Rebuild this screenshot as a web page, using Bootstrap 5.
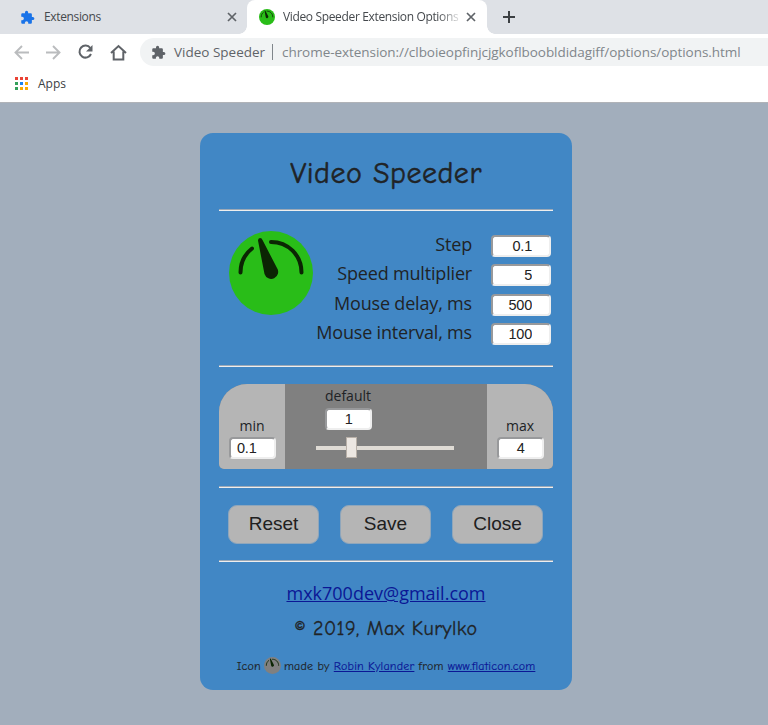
<!DOCTYPE html>
<html lang="en">
<head>
<meta charset="utf-8">
<meta name="viewport" content="width=device-width, initial-scale=1">
<title>Video Speeder Extension Options</title>
<link href="https://cdn.jsdelivr.net/npm/bootstrap@5.3.0/dist/css/bootstrap.min.css" rel="stylesheet">
<style>
html,body{height:100%;overflow:hidden}
body{background:#a2aebc;font-family:"Segoe UI","Open Sans",sans-serif;color:#202326;line-height:1}
svg{display:block;flex:none}
.t{white-space:nowrap;display:block;flex:none}
.strip{height:34px;background:#dee1e6;font-size:12px;letter-spacing:-.35px;color:#45494d}
.tab-a{width:247px;padding-left:20px;padding-right:10px}
.tab-a .t{margin-left:9px}
.tab-b{width:240px;background:#fff;border-radius:8px 8px 0 0;padding-left:12px;padding-right:11px}
.tab-b::before,.tab-b::after{content:"";position:absolute;bottom:0;width:8px;height:8px}
.tab-b::before{left:-8px;background:radial-gradient(circle at 0 0,transparent 7.5px,#fff 8px)}
.tab-b::after{right:-8px;background:radial-gradient(circle at 100% 0,transparent 7.5px,#fff 8px)}
.fade-end{width:176px;overflow:hidden;-webkit-mask-image:linear-gradient(90deg,#000 155px,transparent 180px);mask-image:linear-gradient(90deg,#000 155px,transparent 180px)}
.bar{height:36px;padding-left:14px}
.omni{height:28px;background:#f1f3f4;border-radius:14px 0 0 14px;margin-left:13px;padding-left:11px;font-size:13.5px;color:#5f6368}
.omni .t{margin-top:1px}
.ext{margin-left:8px;width:91px}
.omni-line{width:1px;height:16px;background:#80868b;margin-left:7px;margin-right:9px}
.url{color:#80868b;letter-spacing:-.05px}
.marks{height:33px;padding-left:15px;padding-bottom:4px;font-size:12px;color:#3c4043;border-bottom:1px solid #b0b3b8}
.marks .t{margin-left:9px}
.panel{width:372px;height:557px;margin-top:30px;margin-left:200px;background:#4187c5;border-radius:13px;padding:0 19px}
.comic{font-family:"Comic Sans MS","Comic Neue","Open Sans",cursive}
.rule{height:2px;background:linear-gradient(#9ca9b7 50%,#eee 50%);flex:none}
.s1{height:76px;padding-top:6px}.s2{height:154px}.s3{height:119px}.s4{height:72px}.s5{height:128px}
.s1,.s2,.s3,.s4,.s5{flex:none}
.title{font-size:30px;letter-spacing:.5px;-webkit-text-stroke:.5px #202326}
.dial-lg{margin:20px 0 0 10px;color:#29bd18}
.opts{margin:20px 2px 0 0}
.opt{height:29.3px}
.opt .num{margin-left:19px;margin-top:1px}
.lab{font-size:18px;letter-spacing:-.18px;margin-top:-3px}
.num{font-family:"Liberation Sans",Arial,sans-serif;font-size:14.5px;letter-spacing:-.2px;background:#fff;border:2px solid;border-color:#98999b #eee #eee #98999b;border-radius:4px;height:22px;padding:0 17px 0 0;color:#222;text-align:right;flex:none}
.w60{width:60px}.w47{width:47px}
.range-box{height:85px;margin-top:17px;border-radius:28px 28px 5px 5px;background:#808080;overflow:hidden;font-size:14px}
.side{width:66px;background:#b5b5b5}
.side .num{margin:4px 0 10px}
.def{width:60px;margin-left:33px;padding-top:5px}
.def .num{margin-top:5px}
.track{height:4px;width:138px;margin:16px 0 0 31px;background:#dfdbd5}
.knob{left:30px;top:-9px;width:11px;height:21px;background:#ece7e2;border:1px solid #b8b0a8}
.acts{padding:0 10px 0 9px}
.act{font-family:"Liberation Sans",Arial,sans-serif;font-size:19px;width:91px;height:39px;background:#b5b5b5;border-radius:9px;padding:0 0 2px;color:#202020;line-height:1;border:1px solid #8fa6bb}
.act:hover{background:#c4c4c4}
.panel a,.panel a:hover{color:#0b1795}
.mail{font-size:18px;margin-top:22px}
.copy{font-size:20px;letter-spacing:.45px;margin-top:17px;-webkit-text-stroke:.3px #202326}
.credit{font-size:12px;letter-spacing:.2px;margin-top:18px;gap:3px;-webkit-text-stroke:.15px currentColor}
.dial-sm{color:#808080}
</style>
</head>
<body>
<svg width="0" height="0" class="position-absolute"><defs>
<symbol id="puzzle" viewBox="0 0 24 24"><path fill="currentColor" d="M20.5 11H19V7c0-1.100-.9-2-2-2h-4V3.500a2.500 2.500 0 0 0-5 0V5H4c-1.100 0-2 .9-2 2v3.800h1.500a2.700 2.700 0 0 1 0 5.400H2V20c0 1.100.9 2 2 2h3.800v-1.500a2.700 2.700 0 0 1 5.400 0V22H17c1.100 0 2-.9 2-2v-4h1.500a2.500 2.500 0 0 0 0-5z"/></symbol>
<symbol id="dial" viewBox="0 0 84 84"><circle cx="42" cy="42" r="42" fill="currentColor"/><g fill="none" stroke="#0b2503" stroke-width="4" stroke-linecap="round"><path d="M11.500 41.500C11.500 31 16 23 23 17.500M42 11C59 11 72.500 24 72.500 41.500"/></g><path fill="#0b2503" d="M29 9.500Q29 7 31 7T33.500 9L48 37A7 7 0 1 1 35.500 43Z"/></symbol>
</defs></svg>

<header class="bg-white">
  <div class="strip d-flex">
    <div class="tab-a d-flex align-items-center">
      <svg width="15" height="15" style="color:#1a73e8"><use href="#puzzle"/></svg>
      <span class="t">Extensions</span>
      <svg class="ms-auto" width="10" height="10" stroke="#5f6368" stroke-width="1.700"><path d="M1 1l8 8M9 1L1 9"/></svg>
    </div>
    <div class="tab-b position-relative d-flex align-items-center">
      <svg width="16" height="16" style="color:#29bd18"><use href="#dial"/></svg>
      <span class="t fade-end ms-2 py-1">Video Speeder Extension Options</span>
      <svg class="ms-auto" width="10" height="10" stroke="#5f6368" stroke-width="1.700"><path d="M1 1l8 8M9 1L1 9"/></svg>
    </div>
    <svg class="align-self-center ms-3" width="12" height="12" stroke="#3c4043" stroke-width="2"><path d="M6 0v12M0 6h12"/></svg>
  </div>
  <nav class="bar d-flex align-items-center">
    <svg width="15" height="15" fill="none" stroke="#babcbe" stroke-width="1.900"><path d="M15 7.500H2M8 1L1.500 7.500 8 14"/></svg>
    <svg class="ms-3" width="16" height="15" fill="none" stroke="#babcbe" stroke-width="1.900"><path d="M1 7.500h13M8 1l6.500 6.500L8 14"/></svg>
    <svg class="ms-3" width="17" height="16" fill="none"><path stroke="#5f6368" stroke-width="2" d="M13.300 4A6 6 0 1 0 14 10"/><path fill="#5f6368" d="M15.500 1v6.500H9z"/></svg>
    <svg class="ms-3" width="17" height="17" fill="none" stroke="#5f6368" stroke-width="2"><path d="M1 9l7.500-7L16 9M3.700 7.500V15.500h9.600V7.500"/></svg>
    <div class="omni d-flex align-items-center flex-grow-1">
      <svg width="15" height="15"><use href="#puzzle"/></svg>
      <span class="t ext">Video Speeder</span>
      <span class="omni-line"></span>
      <span class="t url">chrome-extension://clboieopfinjcjgkoflboobldidagiff/options/options.html</span>
    </div>
  </nav>
  <div class="marks d-flex align-items-center">
    <svg width="14" height="14"><path fill="#ea4335" d="M0 0h3v3H0zM5 0h3v3H5zM10 0h3v3h-3z"/><path fill="#34a05a" d="M0 5h3v3H0zM0 10h3v3H0z"/><path fill="#1a84ee" d="M5 5h3v3H5z"/><path fill="#f9ab00" d="M10 5h3v3h-3zM5 10h3v3H5zM10 10h3v3h-3z"/></svg>
    <span class="t">Apps</span>
  </div>
</header>

<main class="panel d-flex flex-column">
  <div class="s1 d-flex justify-content-center align-items-center"><h1 class="t title comic m-0 fw-normal">Video Speeder</h1></div>
  <div class="rule"></div>
  <div class="s2 d-flex justify-content-between">
    <svg class="dial-lg" width="84" height="84"><use href="#dial"/></svg>
    <div class="opts d-flex flex-column">
      <div class="opt d-flex justify-content-end align-items-center"><span class="t lab">Step</span><input class="num w60" value="0.1"></div>
      <div class="opt d-flex justify-content-end align-items-center"><span class="t lab">Speed multiplier</span><input class="num w60" value="5"></div>
      <div class="opt d-flex justify-content-end align-items-center"><span class="t lab">Mouse delay, ms</span><input class="num w60" value="500"></div>
      <div class="opt d-flex justify-content-end align-items-center"><span class="t lab">Mouse interval, ms</span><input class="num w60" value="100"></div>
    </div>
  </div>
  <div class="rule"></div>
  <div class="s3">
    <div class="range-box d-flex">
      <div class="side d-flex flex-column align-items-center justify-content-end"><span class="t">min</span><input class="num w47" value="0.1"></div>
      <div class="flex-grow-1">
        <div class="def d-flex flex-column align-items-center"><span class="t">default</span><input class="num w47" value="1"></div>
        <div class="track position-relative"><div class="knob position-absolute"></div></div>
      </div>
      <div class="side d-flex flex-column align-items-center justify-content-end"><span class="t">max</span><input class="num w47" value="4"></div>
    </div>
  </div>
  <div class="rule"></div>
  <div class="s4 d-flex justify-content-between align-items-center acts"><button class="btn act">Reset</button><button class="btn act">Save</button><button class="btn act">Close</button></div>
  <div class="rule"></div>
  <div class="s5 d-flex flex-column align-items-center">
    <a class="t mail" href="#">mxk700dev@gmail.com</a>
    <span class="t comic copy">© 2019, Max Kurylko</span>
    <div class="comic credit d-flex align-items-center"><span class="t">Icon</span><svg class="dial-sm" width="17" height="17"><use href="#dial"/></svg><span class="t">made by <a href="#">Robin Kylander</a> from <a href="#">www.flaticon.com</a></span></div>
  </div>
</main>
<script src="https://cdn.jsdelivr.net/npm/bootstrap@5.3.0/dist/js/bootstrap.bundle.min.js"></script>
</body>
</html>
